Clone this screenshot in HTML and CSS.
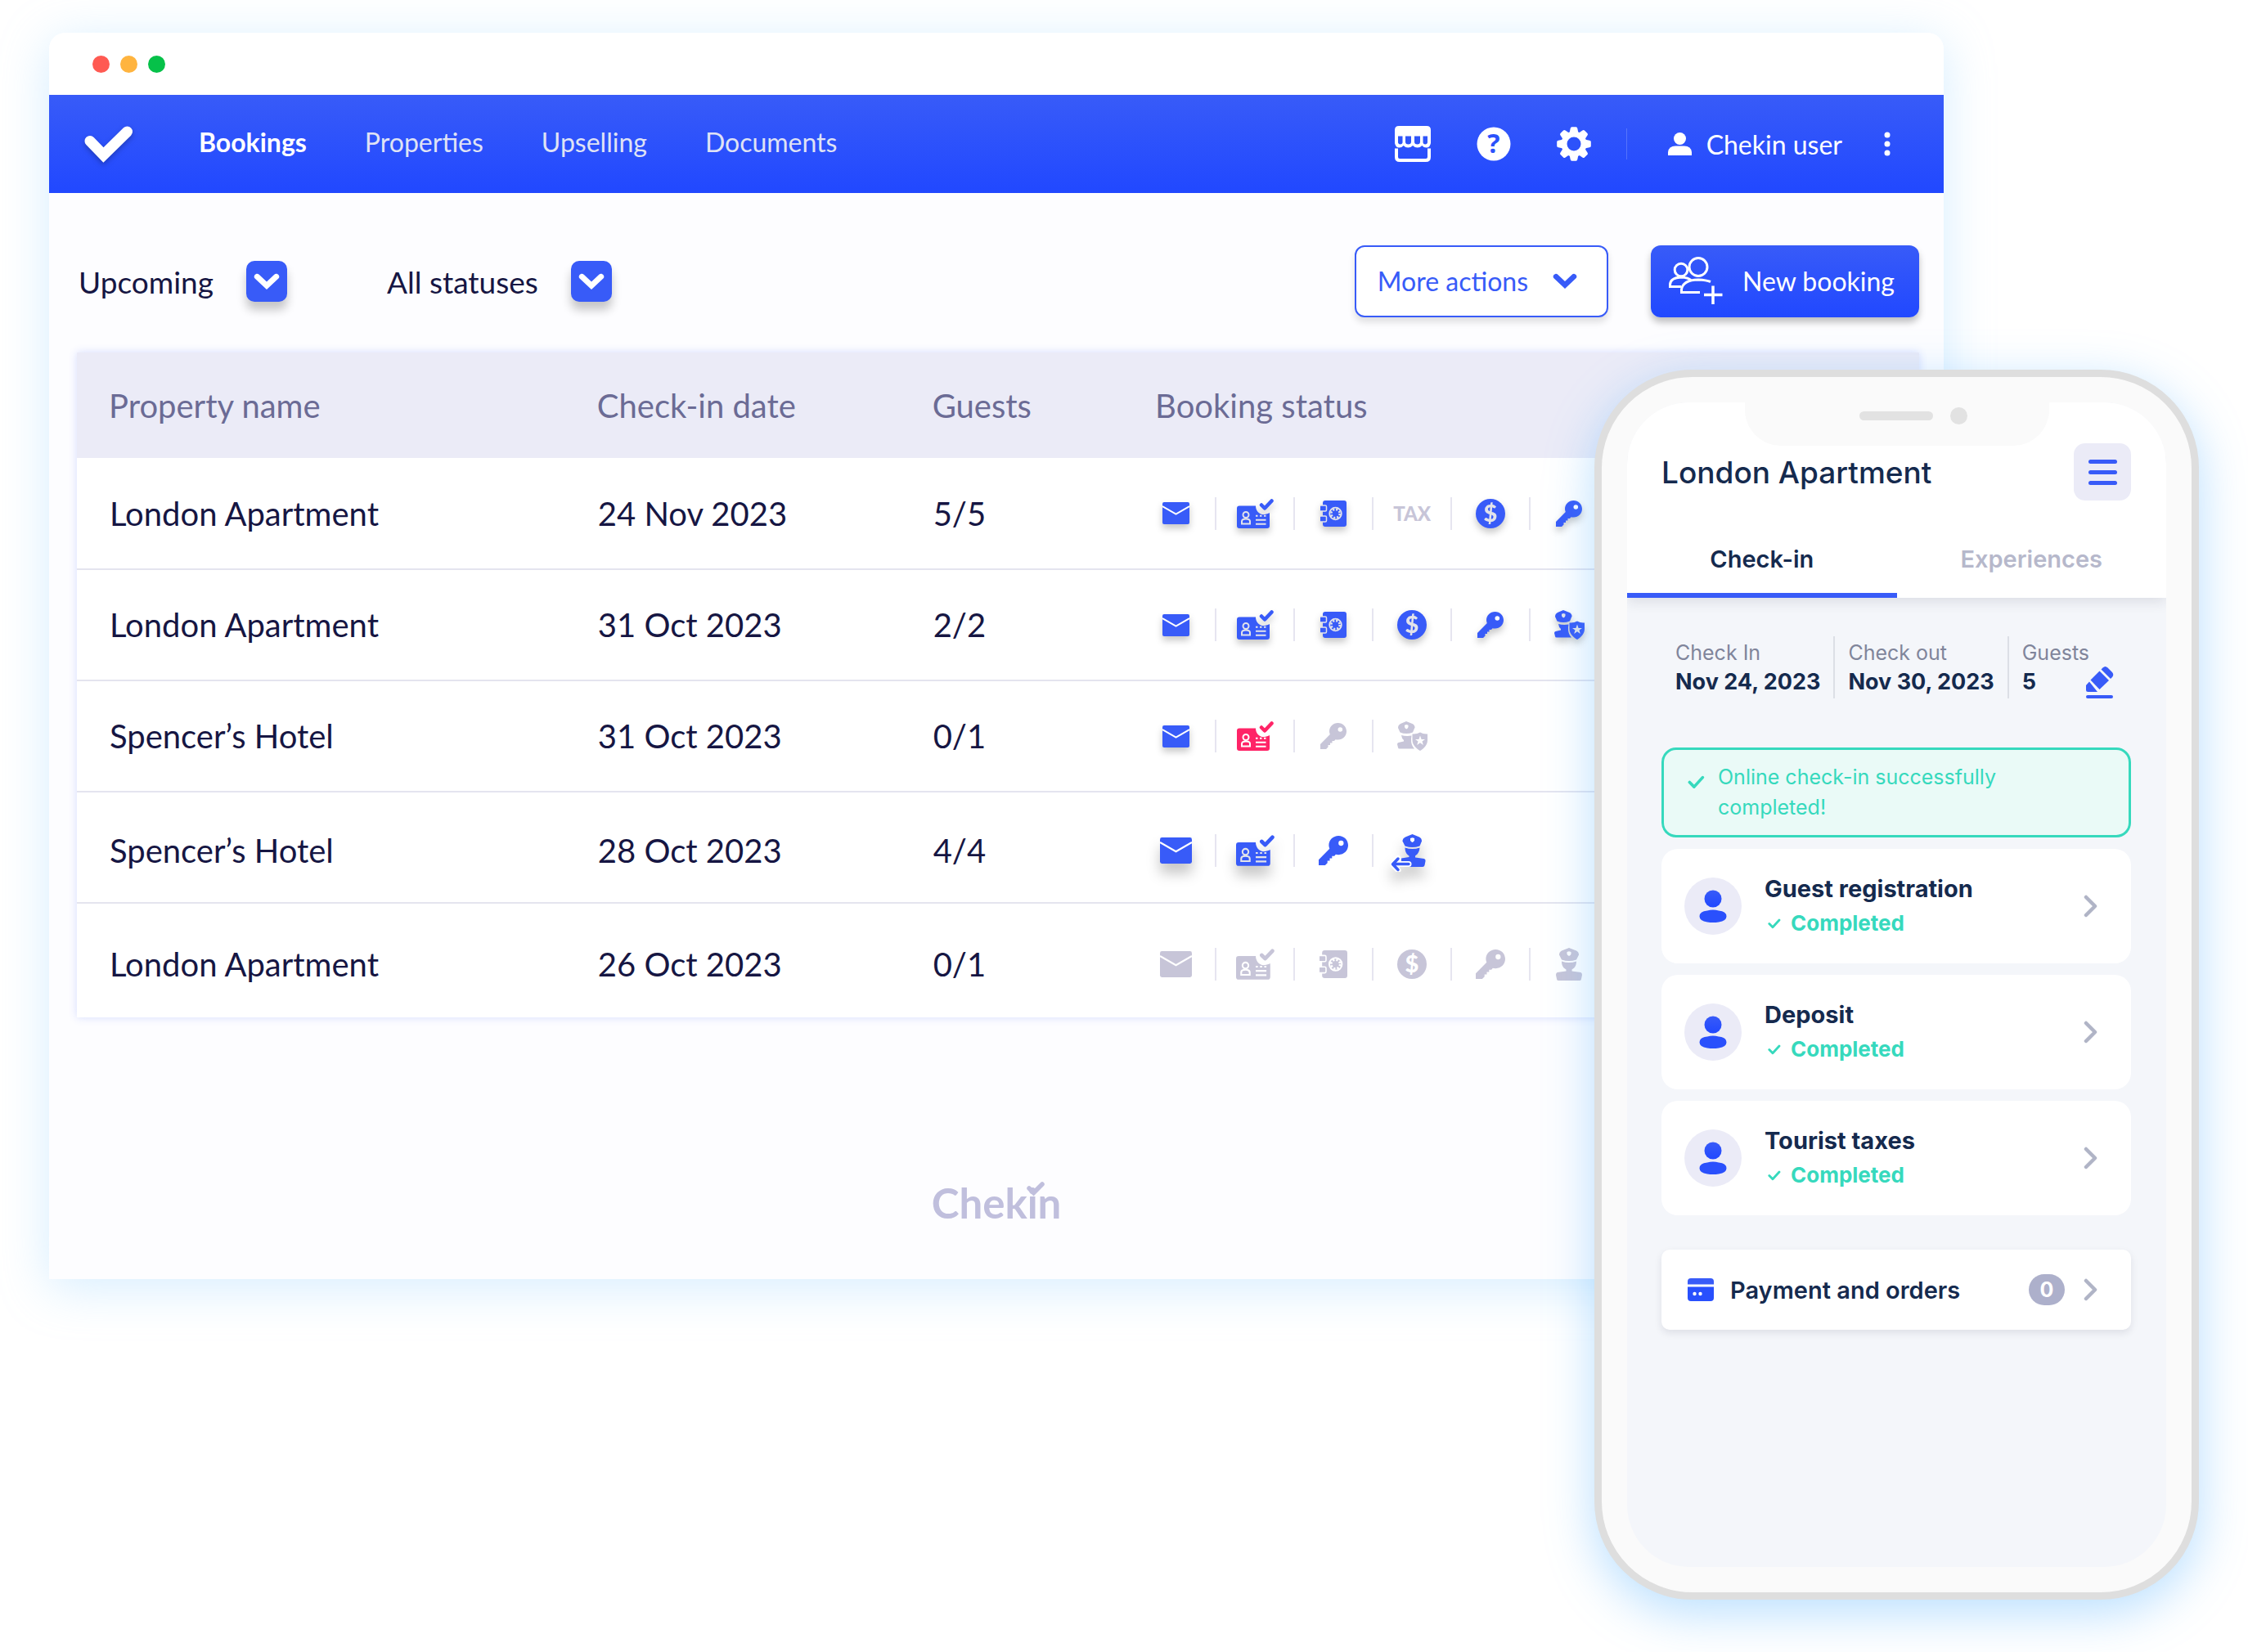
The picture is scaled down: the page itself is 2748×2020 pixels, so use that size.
FILE: index.html
```html
<!DOCTYPE html>
<html lang="en">
<head>
    <meta charset="UTF-8">
    <meta name="viewport" content="width=device-width, initial-scale=1.0">
    <title>Chekin - Bookings</title>
    <link rel="stylesheet" href="styles.css">
</head>
<body>
    <!-- Icon sprite -->
    <svg class="sprite" aria-hidden="true">
        <symbol id="i-mail" viewBox="0 0 33 27">
            <rect width="33" height="27" rx="2" fill="currentColor"/>
            <path d="M0 5L16.500 14.500L33 5" fill="none" stroke="#fff" stroke-width="2"/>
        </symbol>
        <symbol id="i-card" viewBox="0 0 45 36">
            <path d="M3 8.500H23C23 15 28 20 34 19C37 18.500 39 17.500 40 17V33Q40 36 37 36H3Q0 36 0 33V11.500Q0 8.500 3 8.500Z" fill="currentColor"/>
            <path d="M30 7.500L34 11.500L42.500 2.500" fill="none" stroke="currentColor" stroke-width="4.500" stroke-linecap="round" stroke-linejoin="round"/>
            <circle cx="11" cy="19.500" r="3.500" fill="none" stroke="var(--cut)" stroke-width="2"/>
            <path d="M6 30.500V27.500Q6 24.500 11 24.500Q16 24.500 16 27.500V30.500Z" fill="none" stroke="var(--cut)" stroke-width="2"/>
            <path d="M23 20.800h2.500M28 20.800h2.500M33 20.800h2.500M23 25.800h12.500M23 30.800h12.500" stroke="var(--cut)" stroke-width="2"/>
        </symbol>
        <symbol id="i-safe" viewBox="0 0 32 32">
            <rect x="3" width="29" height="32" rx="3" fill="currentColor"/>
            <rect x="-1" y="6" width="8.500" height="7" rx="1.500" fill="currentColor" stroke="var(--cut)" stroke-width="1.500"/>
            <rect x="-1" y="19" width="8.500" height="7" rx="1.500" fill="currentColor" stroke="var(--cut)" stroke-width="1.500"/>
            <circle cx="18.500" cy="16" r="7.300" fill="none" stroke="var(--cut)" stroke-width="1.800"/>
            <circle cx="18.500" cy="16" r="5.200" fill="none" stroke="var(--cut)" stroke-width="2.600" stroke-dasharray="2.200 1.884"/>
        </symbol>
        <symbol id="i-coin" viewBox="0 0 36 36">
            <circle cx="18" cy="18" r="18" fill="currentColor"/>
            <text x="18" y="28" text-anchor="middle" class="coin-sign">$</text>
        </symbol>
        <symbol id="i-key" viewBox="0 0 32 32">
            <path d="M21.500 0C27.500 0 32 4.500 32 10.300C32 16 27.500 20.600 21.500 20.600Q19.800 20.600 18.500 20.200L17 22H14.500V24.500H12V27H9.500V29.500L7 32H0V26L11.800 14Q11 12 11 10.300C11 4.500 15.700 0 21.500 0Z" fill="currentColor"/>
            <circle cx="24.300" cy="8" r="2.800" fill="var(--hole)"/>
        </symbol>
        <symbol id="i-police" viewBox="0 0 32 40">
            <path d="M16 0L25 3.500Q28 5 28 8.500L25 14.500Q16 17.500 7 14.500L4 8.500Q4 5 7 3.500Z" fill="currentColor"/>
            <path d="M7 16.500Q16 19.500 25 16.500C25 22 22.500 25 19.500 26.500V28.500L30.500 30Q32 31 32 33L31 38Q31 40 29 40H3Q1 40 1 38L0 33Q0 31 1.500 30L12.500 28.500V26.500C9.500 25 7 22 7 16.500Z" fill="currentColor"/>
            <path d="M13.500 5L16 4.300L18.500 5V7.500Q18 9 16 10Q14 9 13.500 7.500Z" fill="var(--cut)"/>
        </symbol>
        <symbol id="i-police-shield" viewBox="0 0 37 36">
            <path d="M11 0L18.500 3Q21.500 4.500 21.500 7.500L19 13.500Q11 16.500 3.500 13.500L1 8Q1 4.500 4 3Z" fill="currentColor"/>
            <path d="M5 17Q11 18.500 17.500 17.500L17 21Q16.500 29 21 33.500H3Q1 33.500 1 32L0 28Q0 26.500 1.500 26L8 24.500V23Q5.500 21 5 17Z" fill="currentColor"/>
            <path d="M28 13.500Q32 16 37 15.500V23C37 29 32.500 33.500 28 36C23.500 33.500 18.500 29 18.500 23V15.500Q24 16 28 13.500Z" fill="currentColor"/>
            <path d="M28 17.500L29.600 22H34L30.500 24.600L31.800 29L28 26.300L24.200 29L25.500 24.600L22 22H26.400Z" fill="var(--cut)"/>
            <path d="M9 4.800L11.300 4L13.500 4.800V7Q13 8.500 11.300 9.500Q9.500 8.500 9 7Z" fill="var(--cut)"/>
        </symbol>
        <symbol id="i-police-arrow" viewBox="0 0 53 46">
            <path d="M26.500 0L35 3.500Q38 5 38 8.500L35.500 14.500Q26.500 17.500 17.500 14.500L14.500 8.500Q14.500 5 18 3.500Z" fill="currentColor"/>
            <path d="M17.500 16.500Q26.500 19.500 35.500 16.500C35 22 32.500 25 30 26.500V28.500L41 30Q43 31 42.500 33L41.500 38Q41 40 39 40H13V29.500L22.500 28V26.500C20 25 17.500 22 17.500 16.500Z" fill="currentColor"/>
            <path d="M22 36.500H3M9 29.500L2.500 36.800L9 44" fill="none" stroke="#fff" stroke-width="7" stroke-linecap="round"/>
            <path d="M22 36.500H3M9 30L2.500 36.800L9 43.500" fill="none" stroke="currentColor" stroke-width="3.500" stroke-linecap="round" stroke-linejoin="round"/>
            <path d="M24 5L26.500 4.300L29 5V7.500Q28.500 9 26.500 10Q24.500 9 24 7.500Z" fill="#fff"/>
        </symbol>
        <symbol id="i-tick" viewBox="0 0 16 13">
            <path d="M1.800 6.500L6 10.800L14 2" fill="none" stroke="currentColor" stroke-width="2.800" stroke-linecap="round" stroke-linejoin="round"/>
        </symbol>
        <symbol id="i-down" viewBox="0 0 32 20">
            <path d="M3.500 0.800Q1 1.500 0.600 4Q0.600 5.500 1.600 6.500L16 20L30.400 6.500Q31.400 5.500 31.400 4Q31 1.500 28.500 0.800Q26.500 0.500 25 2L16 10.500L7 2Q5.500 0.500 3.500 0.800Z" fill="currentColor"/>
        </symbol>
        <symbol id="i-right" viewBox="0 0 18 28">
            <path d="M3 3L14 14L3 25" fill="none" stroke="currentColor" stroke-width="4.500" stroke-linecap="round" stroke-linejoin="round"/>
        </symbol>
        <symbol id="i-guest" viewBox="0 0 34 40">
            <linearGradient id="guest-fill" x1="0" y1="0" x2="0" y2="1">
                <stop offset="0" stop-color="#385bf8"/>
                <stop offset="1" stop-color="#2148ff"/>
            </linearGradient>
            <circle cx="17" cy="11" r="10.500" fill="url(#guest-fill)"/>
            <path d="M10 25.500Q17 23.500 24 25.500Q33.500 26.500 33.500 32.500Q33.500 38 24 39.500Q17 40.500 10 39.500Q0.500 38 0.500 32.500Q0.500 26.500 10 25.500Z" fill="#2a50fc"/>
        </symbol>
    </svg>

    <main class="window">
        <div class="title-bar">
            <span class="dot red"></span>
            <span class="dot amber"></span>
            <span class="dot green"></span>
        </div>

        <header class="navbar">
            <a href="#" class="brand" aria-label="Chekin">
                <svg width="60" height="46" viewBox="0 0 60 46">
                    <path d="M7 19.500L23.500 36.500L52.500 8" fill="none" stroke="#fff" stroke-width="13" stroke-linecap="round" stroke-linejoin="miter"/>
                </svg>
            </a>
            <nav class="nav-links">
                <a href="#" class="active">Bookings</a>
                <a href="#">Properties</a>
                <a href="#">Upselling</a>
                <a href="#">Documents</a>
            </nav>
            <div class="nav-tools">
                <button type="button" class="tool" aria-label="Marketplace">
                    <svg width="44" height="44" viewBox="0 0 44 44">
                        <path d="M5 0H39Q44 0 44 5V21Q43 26.500 38.500 26.500Q35.500 26.500 33.300 24Q31 26.500 27.800 26.500Q24.500 26.500 22 24Q19.500 26.500 16.200 26.500Q13 26.500 10.700 24Q8.500 26.500 5.500 26.500Q1 26.500 0 21V5Q0 0 5 0Z" fill="#fff"/>
                        <path d="M4 12.500H9.500V20.500Q9 22.500 6.800 22.500Q4.500 22.500 4 20.500ZM13 12.500H20V20Q19.500 22.500 16.500 22.500Q13.500 22.500 13 20ZM24 12.500H31V20Q30.500 22.500 27.500 22.500Q24.500 22.500 24 20ZM34.500 12.500H40V20.500Q39.500 22.500 37.200 22.500Q35 22.500 34.500 20.500Z" fill="#2f55fa"/>
                        <path d="M2 27.500V38Q2 42 6 42H38Q42 42 42 38V27.500" fill="none" stroke="#fff" stroke-width="4"/>
                    </svg>
                </button>
                <button type="button" class="tool" aria-label="Help">
                    <svg width="42" height="42" viewBox="0 0 42 42">
                        <circle cx="21" cy="21" r="20.500" fill="#fff"/>
                        <text x="21" y="32" text-anchor="middle" class="help-sign">?</text>
                    </svg>
                </button>
                <button type="button" class="tool" aria-label="Settings">
                    <svg width="42" height="42" viewBox="-21 -21 42 42">
                        <g fill="#fff">
                            <circle r="15.500"/>
                            <path id="tooth" d="M-5.500 -13L-4.300 -19Q-4 -20.800 -2.500 -20.800H2.500Q4 -20.800 4.300 -19L5.500 -13V13L4.300 19Q4 20.800 2.500 20.800H-2.500Q-4 20.800 -4.300 19L-5.500 13Z"/>
                            <use href="#tooth" transform="rotate(45)"/>
                            <use href="#tooth" transform="rotate(90)"/>
                            <use href="#tooth" transform="rotate(135)"/>
                        </g>
                        <circle r="8.500" fill="#2c52fb"/>
                    </svg>
                </button>
                <span class="tool-divider"></span>
                <a href="#" class="user">
                    <svg width="29" height="28" viewBox="0 0 29 28">
                        <circle cx="14.500" cy="7.500" r="7.500" fill="#fff"/>
                        <path d="M0 28V24Q1 16.500 9 16.500H20Q28 16.500 29 24V28Z" fill="#fff"/>
                    </svg>
                    Chekin user
                </a>
                <button type="button" class="tool kebab" aria-label="More">
                    <svg width="8" height="30" viewBox="0 0 8 30">
                        <g fill="#fff">
                            <circle cx="4" cy="4" r="3.500"/>
                            <circle cx="4" cy="15" r="3.500"/>
                            <circle cx="4" cy="26" r="3.500"/>
                        </g>
                    </svg>
                </button>
            </div>
        </header>

        <section class="content">
            <div class="toolbar">
                <div class="filter">
                    <select aria-label="Period">
                        <option>Upcoming</option>
                    </select>
                    <span class="filter-arrow"><svg width="32" height="20"><use href="#i-down"/></svg></span>
                </div>
                <div class="filter">
                    <select aria-label="Status">
                        <option>All statuses</option>
                    </select>
                    <span class="filter-arrow"><svg width="32" height="20"><use href="#i-down"/></svg></span>
                </div>
                <div class="actions">
                    <button type="button" class="btn btn-outline">
                        More actions
                        <svg width="30" height="19"><use href="#i-down"/></svg>
                    </button>
                    <button type="button" class="btn btn-primary">
                        <svg width="66" height="58" viewBox="0 0 66 58">
                            <g fill="none" stroke="#fff" stroke-width="3">
                                <circle cx="36" cy="12.500" r="11"/>
                                <circle cx="15" cy="16" r="7.800"/>
                                <path d="M15 36.500H1.500V34Q2 25.500 15 25Q24 25.500 27 28.500"/>
                                <path d="M38 43.500H15.500V40Q17 28.500 36 28Q46 28.500 51 30.500"/>
                                <path d="M54 35.500V58M43 46.500H65.500" stroke-width="3.500"/>
                            </g>
                        </svg>
                        New booking
                    </button>
                </div>
            </div>

            <table class="bookings">
                <thead>
                    <tr>
                        <th class="col-name">Property name</th>
                        <th class="col-date">Check-in date</th>
                        <th class="col-guests">Guests</th>
                        <th class="col-status">Booking status</th>
                    </tr>
                </thead>
                <tbody>
                    <tr>
                        <td>London Apartment</td>
                        <td>24 Nov 2023</td>
                        <td>5/5</td>
                        <td>
                            <ul class="status">
                                <li class="on"><svg width="33" height="27"><use href="#i-mail"/></svg></li>
                                <li class="on"><svg width="45" height="36"><use href="#i-card"/></svg></li>
                                <li class="on"><svg width="32" height="32"><use href="#i-safe"/></svg></li>
                                <li>TAX</li>
                                <li class="on"><svg width="36" height="36"><use href="#i-coin"/></svg></li>
                                <li class="on"><svg width="32" height="32"><use href="#i-key"/></svg></li>
                            </ul>
                        </td>
                    </tr>
                    <tr>
                        <td>London Apartment</td>
                        <td>31 Oct 2023</td>
                        <td>2/2</td>
                        <td>
                            <ul class="status">
                                <li class="on"><svg width="33" height="27"><use href="#i-mail"/></svg></li>
                                <li class="on"><svg width="45" height="36"><use href="#i-card"/></svg></li>
                                <li class="on"><svg width="32" height="32"><use href="#i-safe"/></svg></li>
                                <li class="on"><svg width="36" height="36"><use href="#i-coin"/></svg></li>
                                <li class="on"><svg width="32" height="32"><use href="#i-key"/></svg></li>
                                <li class="on"><svg width="37" height="36"><use href="#i-police-shield"/></svg></li>
                            </ul>
                        </td>
                    </tr>
                    <tr>
                        <td>Spencer’s Hotel</td>
                        <td>31 Oct 2023</td>
                        <td>0/1</td>
                        <td>
                            <ul class="status">
                                <li class="on"><svg width="33" height="27"><use href="#i-mail"/></svg></li>
                                <li class="error"><svg width="45" height="36"><use href="#i-card"/></svg></li>
                                <li><svg width="32" height="32"><use href="#i-key"/></svg></li>
                                <li><svg width="37" height="36"><use href="#i-police-shield"/></svg></li>
                            </ul>
                        </td>
                    </tr>
                    <tr class="past">
                        <td>Spencer’s Hotel</td>
                        <td>28 Oct 2023</td>
                        <td>4/4</td>
                        <td>
                            <ul class="status">
                                <li class="on deep"><svg width="39" height="32"><use href="#i-mail"/></svg></li>
                                <li class="on deep"><svg width="47" height="38"><use href="#i-card"/></svg></li>
                                <li class="on flat"><svg width="36" height="36"><use href="#i-key"/></svg></li>
                                <li class="on deep"><svg width="53" height="46"><use href="#i-police-arrow"/></svg></li>
                            </ul>
                        </td>
                    </tr>
                    <tr class="past">
                        <td>London Apartment</td>
                        <td>26 Oct 2023</td>
                        <td>0/1</td>
                        <td>
                            <ul class="status">
                                <li><svg width="39" height="32"><use href="#i-mail"/></svg></li>
                                <li><svg width="47" height="38"><use href="#i-card"/></svg></li>
                                <li><svg width="34" height="34"><use href="#i-safe"/></svg></li>
                                <li><svg width="36" height="36"><use href="#i-coin"/></svg></li>
                                <li><svg width="36" height="36"><use href="#i-key"/></svg></li>
                                <li><svg width="32" height="40"><use href="#i-police"/></svg></li>
                            </ul>
                        </td>
                    </tr>
                </tbody>
            </table>
        </section>

        <footer class="footer">
            <span class="wordmark">Chekin<svg class="wordmark-tick" width="22" height="17" viewBox="0 0 22 17"><path d="M3 8L8.500 13.500L19 3" fill="none" stroke="currentColor" stroke-width="5.500" stroke-linecap="round"/></svg></span>
        </footer>
    </main>

    <aside class="phone">
        <div class="screen">
            <div class="notch">
                <span class="speaker"></span>
                <span class="camera"></span>
            </div>
            <header class="app-header">
                <div class="app-title">
                    <h1>London Apartment</h1>
                    <button type="button" class="menu" aria-label="Menu">
                        <span></span>
                        <span></span>
                        <span></span>
                    </button>
                </div>
                <div class="tabs">
                    <button type="button" class="tab active">Check-in</button>
                    <button type="button" class="tab">Experiences</button>
                </div>
            </header>

            <div class="app-body">
                <div class="stay">
                    <dl>
                        <dt>Check In</dt>
                        <dd>Nov 24, 2023</dd>
                    </dl>
                    <dl>
                        <dt>Check out</dt>
                        <dd>Nov 30, 2023</dd>
                    </dl>
                    <dl class="guests">
                        <dt>Guests</dt>
                        <dd>5</dd>
                    </dl>
                    <button type="button" class="edit" aria-label="Edit">
                        <svg width="34" height="40" viewBox="0 0 34 40">
                            <g fill="#385bf8">
                                <path d="M20.500 2.500Q23.500 -0.500 26.500 2.500L32 8Q34.500 11 32 14L30 16L18.500 4.500Z"/>
                                <path d="M16.500 6.500L28 18L16.500 29L5.500 17.500Z"/>
                                <path d="M4 19.500L14 32H2.500Q0 32 0 29.500V24Z"/>
                                <rect y="36" width="33" height="4" rx="2"/>
                            </g>
                        </svg>
                    </button>
                </div>

                <p class="notice">
                    <svg width="21" height="17"><use href="#i-tick"/></svg>
                    Online check-in successfully completed!
                </p>

                <a href="#" class="step">
                    <span class="avatar"><svg width="34" height="40"><use href="#i-guest"/></svg></span>
                    <span class="step-text">
                        <strong>Guest registration</strong>
                        <span class="done"><svg width="16" height="13"><use href="#i-tick"/></svg>Completed</span>
                    </span>
                    <svg class="chevron" width="18" height="28"><use href="#i-right"/></svg>
                </a>
                <a href="#" class="step">
                    <span class="avatar"><svg width="34" height="40"><use href="#i-guest"/></svg></span>
                    <span class="step-text">
                        <strong>Deposit</strong>
                        <span class="done"><svg width="16" height="13"><use href="#i-tick"/></svg>Completed</span>
                    </span>
                    <svg class="chevron" width="18" height="28"><use href="#i-right"/></svg>
                </a>
                <a href="#" class="step">
                    <span class="avatar"><svg width="34" height="40"><use href="#i-guest"/></svg></span>
                    <span class="step-text">
                        <strong>Tourist taxes</strong>
                        <span class="done"><svg width="16" height="13"><use href="#i-tick"/></svg>Completed</span>
                    </span>
                    <svg class="chevron" width="18" height="28"><use href="#i-right"/></svg>
                </a>

                <a href="#" class="payment">
                    <svg width="32" height="28" viewBox="0 0 32 28">
                        <path d="M4 0H28Q32 0 32 4V7.500H0V4Q0 0 4 0Z" fill="#385bf8"/>
                        <path d="M0 10.500H32V24Q32 28 28 28H4Q0 28 0 24Z" fill="#2850fd"/>
                        <circle cx="8.500" cy="19" r="2.200" fill="#fff"/>
                        <circle cx="15.500" cy="19" r="2.200" fill="#fff"/>
                    </svg>
                    <span class="payment-label">Payment and orders</span>
                    <span class="count">0</span>
                    <svg class="chevron" width="18" height="28"><use href="#i-right"/></svg>
                </a>
            </div>
        </div>
    </aside>
</body>
</html>
```
FILE: styles.css
```css
:root {
    --blue: #385bf8;
    --blue-deep: #2148ff;
    --ink: #161643;
    --navy: #152a4e;
    --muted: #c7c5d8;
    --lilac: #ebebf7;
    --green: #36d9bd;
    --red: #ff2467;
    --chevron: #b0b4c6;
}

* {
    box-sizing: border-box;
}

body {
    margin: 0;
    padding: 40px 60px;
    min-height: 100vh;
    position: relative;
    background: #fff;
    color: var(--ink);
    font-family: Lato, "Open Sans", sans-serif;
    overflow: hidden;
}

a {
    color: inherit;
    text-decoration: none;
}

button {
    margin: 0;
    padding: 0;
    border: 0;
    background: none;
    color: inherit;
    font: inherit;
    cursor: pointer;
}

svg {
    display: block;
    flex: none;
    overflow: visible;
}

.sprite {
    position: absolute;
    width: 0;
    height: 0;
}

/* Browser window */
.window {
    margin-right: 312px;
    border-radius: 20px 20px 0 0;
    background: #fdfdff;
    box-shadow: 0 10px 60px rgba(150, 210, 255, 0.4);
}

.title-bar {
    display: flex;
    align-items: center;
    gap: 13px;
    height: 76px;
    padding-left: 53px;
    border-radius: 20px 20px 0 0;
    background: #fff;
}

.dot {
    width: 21px;
    height: 21px;
    border-radius: 50%;
}

.red { background: #ff5a52; }
.amber { background: #ffb43f; }
.green { background: #06c149; }

.navbar {
    display: flex;
    align-items: center;
    height: 120px;
    padding: 0 65px 0 43px;
    background: linear-gradient(var(--blue), var(--blue-deep));
    color: #fff;
    font-size: 32px;
}

.brand {
    margin-right: 80px;
    filter: drop-shadow(0 3px 3px rgba(0, 0, 0, 0.25));
}

.nav-links {
    display: flex;
    gap: 71px;
    padding-bottom: 5px;
    color: #dfe2f5;
}

.nav-links .active {
    color: #fff;
    font-weight: 700;
}

.nav-tools {
    display: flex;
    align-items: center;
    gap: 56px;
    margin-left: auto;
}

.tool-divider {
    width: 1px;
    height: 38px;
    margin: 0 -6px 0 -13px;
    background: rgba(255, 255, 255, 0.2);
}

.user {
    display: flex;
    align-items: center;
    gap: 18px;
}

.kebab {
    margin-left: -5px;
}

.help-sign {
    fill: #2c52fb;
    font: 700 32px "Open Sans", sans-serif;
}

.content {
    padding: 64px 30px 0 34px;
}

.toolbar {
    display: flex;
    align-items: center;
    gap: 122px;
    padding-left: 2px;
}

.filter {
    display: flex;
    align-items: center;
    position: relative;
}

.filter select {
    appearance: none;
    margin: 0;
    padding: 0 90px 0 0;
    border: 0;
    background: none;
    color: var(--ink);
    font: 37px Lato, "Open Sans", sans-serif;
}

.filter-arrow {
    position: absolute;
    right: 0;
    display: grid;
    place-items: center;
    width: 50px;
    height: 50px;
    border-radius: 10px;
    background: var(--blue);
    color: #fff;
    box-shadow: 0 10px 12px rgba(0, 0, 0, 0.22);
    pointer-events: none;
}

.actions {
    display: flex;
    gap: 52px;
    margin-left: auto;
}

.btn {
    display: flex;
    align-items: center;
    height: 88px;
    padding-bottom: 2px;
    border-radius: 12px;
    font-size: 32px;
}

.btn-outline {
    gap: 30px;
    padding-right: 36px;
    padding-left: 26px;
    border: 2px solid var(--blue);
    background: #fff;
    color: var(--blue);
    box-shadow: 0 6px 8px rgba(0, 0, 0, 0.12);
}

.btn-primary {
    gap: 24px;
    padding-right: 30px;
    padding-left: 22px;
    background: linear-gradient(var(--blue), var(--blue-deep));
    color: #fff;
    box-shadow: 0 6px 8px rgba(0, 0, 0, 0.25);
}

/* Bookings table */
.bookings {
    width: 100%;
    margin-top: 43px;
    border-collapse: collapse;
    table-layout: fixed;
    background: #fff;
    box-shadow: 0 0 10px rgba(56, 91, 248, 0.2);
    font-size: 40px;
    text-align: left;
}

.bookings th {
    height: 129px;
    padding: 0 0 0 39px;
    background: var(--lilac);
    color: #6b6b95;
    font-weight: 400;
}

.bookings td {
    height: 136px;
    padding: 0 0 0 40px;
    border-bottom: 2px solid #e4e4ef;
}

.bookings .past td {
    padding-top: 8px;
}

.bookings td:last-child {
    padding-left: 16px;
}

.bookings tbody tr:last-child td {
    height: 140px;
    border-bottom: 0;
}

.col-name { width: 26.5%; }
.col-date { width: 18.2%; }
.col-guests { width: 12.1%; }

.status {
    --cut: #fff;
    --hole: #fff;
    display: flex;
    margin: 0;
    padding: 0;
    list-style: none;
}

.status li {
    display: grid;
    place-items: center;
    width: 96px;
    height: 40px;
    color: var(--muted);
    font-size: 24px;
    font-weight: 900;
}

.status li + li {
    border-left: 2px solid #e6e5f0;
}

.status .on {
    --cut: #e2e3ea;
    color: var(--blue);
}

.status .on svg {
    filter: drop-shadow(0 5px 4px rgba(0, 0, 0, 0.22));
}

.status .deep svg {
    filter: drop-shadow(0 12px 8px rgba(0, 0, 0, 0.22));
}

.status .flat svg {
    filter: none;
}

.status .error {
    color: var(--red);
}

.coin-sign {
    fill: var(--cut);
    font: 900 29px Lato, sans-serif;
}

.footer {
    display: flex;
    justify-content: center;
    padding: 197px 0 63px;
}

.wordmark {
    position: relative;
    color: #c0bfdd;
    font-size: 51px;
    font-weight: 700;
    line-height: 60px;
}

.wordmark-tick {
    position: absolute;
    top: 4px;
    right: 20px;
}

/* Phone */
.phone {
    position: absolute;
    top: 452px;
    right: 60px;
    width: 739px;
    padding: 31px;
    border: 9px solid #dedede;
    border-radius: 120px;
    background: #fafafa;
    box-shadow: 0 16px 60px rgba(80, 175, 255, 0.4);
    color: var(--navy);
    font-family: Inter, "Open Sans", sans-serif;
}

.screen {
    position: relative;
    min-height: 1424px;
    border-radius: 76px;
    background: #f4f6fa;
    overflow: hidden;
}

.notch {
    position: absolute;
    top: 0;
    left: 50%;
    display: flex;
    align-items: center;
    justify-content: center;
    gap: 21px;
    width: 372px;
    height: 53px;
    padding: 0 0 20px 40px;
    border-radius: 0 0 44px 44px;
    background: #fafafa;
    transform: translateX(-50%);
}

.speaker {
    width: 90px;
    height: 11px;
    border-radius: 6px;
    background: #e2e2e2;
}

.camera {
    width: 21px;
    height: 21px;
    border-radius: 50%;
    background: #e2e2e2;
}

.app-header {
    padding-top: 50px;
    background: #fff;
    box-shadow: 0 4px 16px rgba(30, 30, 60, 0.12);
}

.app-title {
    display: flex;
    align-items: center;
    justify-content: space-between;
    padding: 0 43px 0 42px;
}

.app-title h1 {
    margin: 0;
    font-size: 37px;
    font-weight: 500;
}

.menu {
    display: flex;
    flex-direction: column;
    align-items: center;
    justify-content: center;
    gap: 8px;
    width: 70px;
    height: 70px;
    border-radius: 14px;
    background: var(--lilac);
}

.menu span {
    width: 35px;
    height: 5px;
    border-radius: 3px;
    background: var(--blue);
}

.tabs {
    display: flex;
    margin-top: 21px;
}

.tab {
    flex: 1;
    height: 98px;
    padding-top: 8px;
    border-bottom: 6px solid transparent;
    color: #b6b8cb;
    font-size: 29px;
    font-weight: 600;
}

.tab.active {
    border-color: var(--blue);
    color: var(--navy);
}

.app-body {
    padding: 47px 43px 46px 42px;
}

.stay {
    display: flex;
    margin-bottom: 60px;
    padding-left: 1px;
}

.stay dl {
    height: 76px;
    margin: 0;
    padding: 2px 16px 0;
}

.stay dl + dl {
    border-left: 2px solid #dcdfe6;
}

.stay .guests {
    flex: 1;
    min-width: 0;
    padding-right: 0;
}

.stay dt {
    color: #80859b;
    font-size: 25px;
    line-height: 36px;
}

.stay dd {
    margin: 0;
    font-size: 27px;
    font-weight: 700;
    line-height: 36px;
    white-space: nowrap;
}

.edit {
    align-self: flex-end;
    width: 34px;
    margin-right: 21px;
}

.notice {
    display: flex;
    align-items: flex-start;
    gap: 16px;
    margin: 0 0 14px;
    padding: 15px 80px 15px 29px;
    border: 3px solid var(--green);
    border-radius: 18px;
    background: #eafaf7;
    color: var(--green);
    font-size: 25px;
    line-height: 37px;
}

.notice svg {
    margin-top: 16px;
}

.step {
    display: flex;
    align-items: center;
    height: 140px;
    margin-bottom: 14px;
    padding: 0 40px 0 28px;
    border-radius: 20px;
    background: #fff;
}

.avatar {
    display: grid;
    place-items: center;
    width: 70px;
    height: 70px;
    margin-right: 28px;
    border-radius: 50%;
    background: var(--lilac);
}

.step-text {
    display: flex;
    flex-direction: column;
    gap: 4px;
}

.step-text strong {
    font-size: 29px;
    font-weight: 700;
    line-height: 38px;
}

.done {
    display: flex;
    align-items: center;
    gap: 12px;
    padding-left: 4px;
    color: var(--green);
    font-size: 26px;
    font-weight: 700;
    line-height: 38px;
}

.chevron {
    margin-left: auto;
    color: var(--chevron);
}

.payment {
    display: flex;
    align-items: center;
    height: 98px;
    margin-top: 42px;
    padding: 0 40px 0 32px;
    border-radius: 10px;
    background: #fff;
    box-shadow: 0 4px 10px rgba(30, 30, 60, 0.1);
}

.payment-label {
    margin-left: 20px;
    font-size: 29px;
    font-weight: 600;
}

.count {
    width: 44px;
    margin-left: auto;
    border-radius: 19px;
    background: #adb0cb;
    color: #fff;
    font-size: 25px;
    font-weight: 700;
    line-height: 38px;
    text-align: center;
}

.payment .chevron {
    margin-left: 23px;
}
```
